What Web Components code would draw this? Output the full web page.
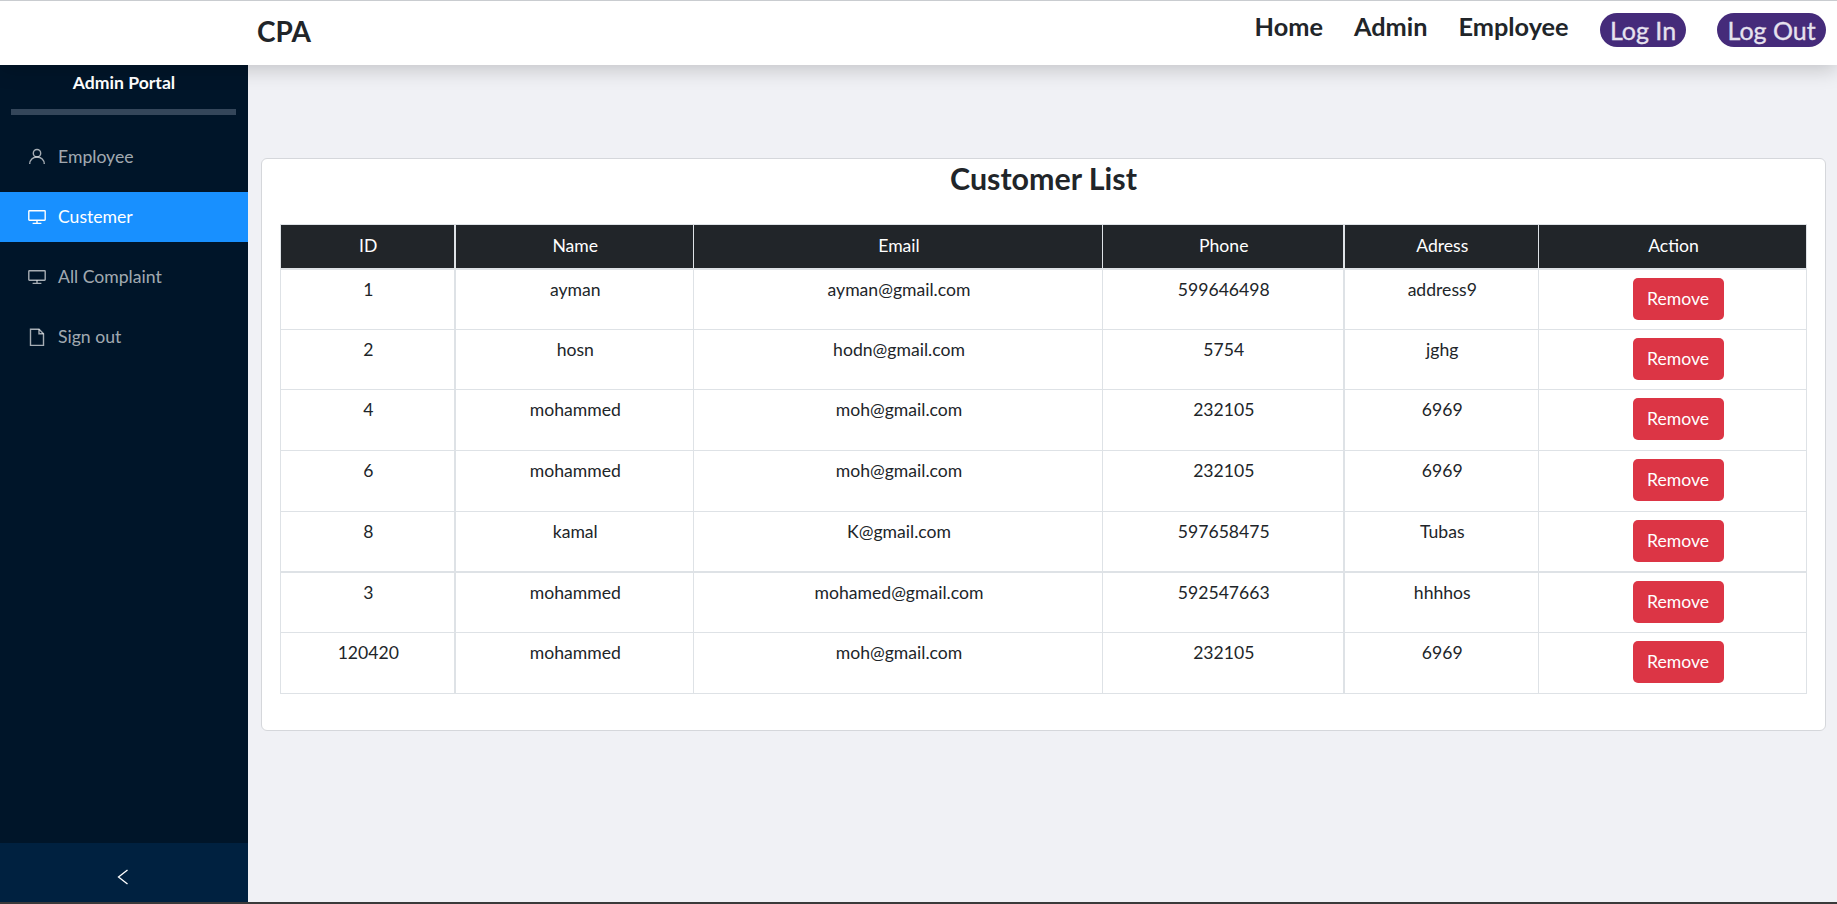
<!DOCTYPE html>
<html>
<head>
<meta charset="utf-8">
<title>CPA</title>
<style>
  html, body { margin: 0; height: 100%; }
  body { font-family: Lato, "Liberation Sans", sans-serif; background: #f0f1f5; color: #212529; overflow: hidden; }
</style>
</head>
<body>
<cpa-app>
  <cpa-navbar slot="top" brand="CPA"></cpa-navbar>
  <cpa-sidebar slot="side" title="Admin Portal">
    <cpa-side-item icon="user">Employee</cpa-side-item>
    <cpa-side-item icon="monitor" active>Custemer</cpa-side-item>
    <cpa-side-item icon="monitor">All Complaint</cpa-side-item>
    <cpa-side-item icon="file">Sign out</cpa-side-item>
  </cpa-sidebar>
  <cpa-customer-list title="Customer List"></cpa-customer-list>
</cpa-app>

<script>
  class CpaApp extends HTMLElement {
    constructor() {
      super();
      this.attachShadow({ mode: "open" });
      this.shadowRoot.innerHTML = `
      <style>
        :host { display: grid; grid-template-columns: 248px 1fr; grid-template-rows: 65px 1fr; height: 904px; box-sizing: border-box; border-bottom: 2px solid #3a3a3a; }
        .top { grid-column: 1 / 3; position: relative; z-index: 2; }
        .main { padding: 93px 11px 0 13px; min-width: 0; }
      </style>
      <div class="top"><slot name="top"></slot></div>
      <slot name="side"></slot>
      <div class="main"><slot></slot></div>
      `;
    }
  }

  class CpaNavbar extends HTMLElement {
    constructor() {
      super();
      this.attachShadow({ mode: "open" });
      this.shadowRoot.innerHTML = `
      <style>
        :host { display: flex; align-items: center; border-top: 1px solid #c9ccd0; background: #fff; padding-left: 257px; box-shadow: 0 4px 20px rgba(0,0,0,.2); box-sizing: border-box; height: 65px; }
        .brand { font-size: 28px; font-weight: 700; color: #212529; padding-bottom: 4px; }
        nav { margin-left: auto; align-self: flex-start; display: flex; align-items: flex-start; gap: 31px; padding: 10px 11px 0 0; }
        a { font-size: 25.3px; line-height: 30px; font-weight: 700; color: #212529; }
        .pill { font-weight: 400; font-size: 25px; line-height: 34px; margin-top: 2px; background: #452b7a; color: #e6e2ee; -webkit-text-stroke: .3px #e6e2ee; border-radius: 17px; padding: 0 10.25px; }
      </style>
      <div class="brand">${this.getAttribute("brand")}</div>
      <nav>
        <a>Home</a><a>Admin</a><a>Employee</a>
        <a class="pill">Log In</a><a class="pill">Log Out</a>
      </nav>
      `;
    }
  }

  class CpaSidebar extends HTMLElement {
    constructor() {
      super();
      this.attachShadow({ mode: "open" });
      this.shadowRoot.innerHTML = `
      <style>
        :host { display: flex; flex-direction: column; background: #001529; color: #fff; min-height: 0; }
        h2 { margin: 0; font-size: 17.6px; font-weight: 700; text-align: center; line-height: 22px; padding-top: 7px; }
        hr { border: 0; height: 6px; background: #34465a; margin: 15px 12px 17px 11px; }
        .items { flex: 1; display: flex; flex-direction: column; gap: 10px; }
        .collapse { height: 59px; box-sizing: border-box; padding-top: 9px; background: #002140; display: flex; align-items: center; justify-content: center; }
        .collapse svg { margin-right: 2px; }
      </style>
      <h2>${this.getAttribute("title")}</h2>
      <hr>
      <div class="items"><slot></slot></div>
      <div class="collapse">
        <svg width="12" height="16" viewBox="0 0 12 16" fill="none" stroke="#fff" stroke-width="1.3"><path d="M10.5 1 1.5 8l9 7"/></svg>
      </div>
      `;
    }
  }

  const ICONS = {
    user: '<circle cx="9" cy="5.2" r="3.7"/><path d="M1.7 16c0-4.2 3.1-7 7.3-7s7.3 2.8 7.3 7"/>',
    monitor: '<rect x=".8" y="2.8" width="16.4" height="9.4" rx=".6"/><path d="M9 12.2v3M4.6 15.4h8.8"/>',
    file: '<path d="M2.5 1.2h8.5l4.5 4.5v11.8h-13z"/><path d="M11 1.2v4.5h4.5"/>',
  };

  class CpaSideItem extends HTMLElement {
    constructor() {
      super();
      this.attachShadow({ mode: "open" });
      const icon = ICONS[this.getAttribute("icon")];
      this.shadowRoot.innerHTML = `
      <style>
        :host { display: flex; align-items: center; gap: 12px; height: 50px; padding-left: 28px; color: rgba(255,255,255,.65); font-size: 17.6px; }
        :host([active]) { background: #1890ff; color: #fff; }
        svg { width: 18px; height: 18px; flex: none; }
        span { padding-bottom: 1px; }
      </style>
      <svg viewBox="0 0 18 18" fill="none" stroke="currentColor" stroke-width="1.4">${icon}</svg>
      <span><slot></slot></span>
      `;
    }
  }

  const CUSTOMERS = [
    ["1", "ayman", "ayman@gmail.com", "599646498", "address9"],
    ["2", "hosn", "hodn@gmail.com", "5754", "jghg"],
    ["4", "mohammed", "moh@gmail.com", "232105", "6969"],
    ["6", "mohammed", "moh@gmail.com", "232105", "6969"],
    ["8", "kamal", "K@gmail.com", "597658475", "Tubas"],
    ["3", "mohammed", "mohamed@gmail.com", "592547663", "hhhhos"],
    ["120420", "mohammed", "moh@gmail.com", "232105", "6969"],
  ];

  class CpaCustomerList extends HTMLElement {
    constructor() {
      super();
      this.attachShadow({ mode: "open" });
      const rows = CUSTOMERS.map((row) => `
        <tr>${row.map((c) => `<td>${c}</td>`).join("")}<td><button>Remove</button></td></tr>
      `).join("");
      this.shadowRoot.innerHTML = `
      <style>
        :host { display: block; background: #fff; border: 1px solid #d5d7db; border-radius: 6px; padding: 0 18px 36px; font-size: 17.6px; }
        h1 { margin: 0; text-align: center; font-size: 30.4px; font-weight: 700; line-height: 38px; padding: 0 0 27px; color: #212529; }
        table { width: 100%; border-collapse: collapse; table-layout: fixed; }
        th { background: #212529; color: #fff; font-weight: 400; height: 44px; padding: 0 0 2px 2px; box-sizing: border-box; border: 1px solid #dee2e6; border-bottom-width: 2px; }
        td { text-align: center; vertical-align: top; padding: 7px 0 0 2px; height: 60.7px; line-height: 26px; box-sizing: border-box; border: 1px solid #dee2e6; color: #212529; }
        th:nth-child(1), td:nth-child(1), th:nth-child(4), td:nth-child(4) { border-right-width: 2px; }
        tbody tr:nth-child(5) td { border-bottom-width: 2px; }
        button { font: inherit; line-height: 26px; background: #dc3545; color: #fff; border: 0; border-radius: 5px; height: 42px; width: 91px; margin: 1px 0 0 9px; padding: 0; display: inline-block; vertical-align: top; }
      </style>
      <h1>${this.getAttribute("title")}</h1>
      <table>
        <colgroup><col style="width:174px"><col style="width:239px"><col style="width:409px"><col style="width:241px"><col style="width:195px"><col></colgroup>
        <thead><tr><th>ID</th><th>Name</th><th>Email</th><th>Phone</th><th>Adress</th><th>Action</th></tr></thead>
        <tbody>${rows}</tbody>
      </table>
      `;
    }
  }

  customElements.define("cpa-app", CpaApp);
  customElements.define("cpa-navbar", CpaNavbar);
  customElements.define("cpa-sidebar", CpaSidebar);
  customElements.define("cpa-side-item", CpaSideItem);
  customElements.define("cpa-customer-list", CpaCustomerList);
</script>
</body>
</html>
